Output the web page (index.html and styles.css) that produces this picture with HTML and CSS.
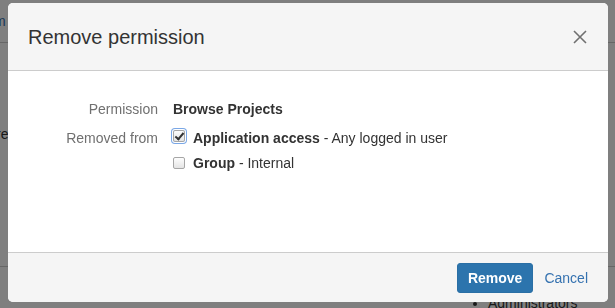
FILE: index.html
```html
<!DOCTYPE html>
<html lang="en">
<head>
  <meta charset="UTF-8">
  <title>Remove permission</title>
  <meta name="viewport" content="width=device-width, initial-scale=1.0">
  <link rel="stylesheet" href="styles.css">
</head>
<body>

  <!-- page behind the dialog -->
  <div class="page">
    <nav class="page-nav"><a href="#">m</a></nav>
    <div class="page-content">
      <p class="page-text">re</p>
    </div>
    <div class="page-bottom">
      <ul class="page-list">
        <li>Administrators</li>
      </ul>
    </div>
  </div>

  <div class="overlay"></div>

  <div class="dialog">
    <header class="dialog-header">
      <h2>Remove permission</h2>
      <button class="close" aria-label="Close">
        <svg width="14" height="14" viewBox="0 0 14 14">
          <path d="M1 1 L13 13 M13 1 L1 13" stroke="#707070" stroke-width="1.6" fill="none"/>
        </svg>
      </button>
    </header>

    <div class="dialog-body">
      <div class="field-row">
        <span class="field-label">Permission</span>
        <span class="field-value"><strong>Browse Projects</strong></span>
      </div>
      <div class="field-row">
        <span class="field-label">Removed from</span>
        <div class="field-value">
          <label class="check first">
            <input type="checkbox" class="focused" checked>
            <span><strong>Application access</strong> - Any logged in user</span>
          </label>
          <label class="check">
            <input type="checkbox">
            <span><strong>Group</strong> - Internal</span>
          </label>
        </div>
      </div>
    </div>

    <footer class="dialog-footer">
      <button class="btn-primary">Remove</button>
      <a href="#" class="cancel">Cancel</a>
    </footer>
  </div>

</body>
</html>
```

FILE: styles.css
```css
body {
  margin: 0;
  width: 615px;
  height: 308px;
  overflow: hidden;
  font-family: 'Liberation Sans', Arial, sans-serif;
  font-size: 14px;
  line-height: 20px;
  color: #333;
  background: #fff;
}

/* page behind */
.page-nav {
  height: 42px;
  border-bottom: 1px solid #ccc;
  display: flex;
  align-items: center;
}

.page-nav a {
  margin-left: -6px;
  color: #3572b0;
  text-decoration: none;
}

.page-content {
  height: 223px;
  border-bottom: 1px solid #ccc;
}

.page-text {
  margin: 0;
  padding-top: 81px;
  margin-left: -4px;
  color: #333;
}

.page-list {
  margin: 0;
  padding: 26px 0 0 488px;
  color: #333;
}

.overlay {
  position: fixed;
  inset: 0;
  background: rgba(0, 0, 0, 0.5);
}

/* dialog */
.dialog {
  position: fixed;
  left: 8px;
  top: 3px;
  width: 600px;
  height: 299px;
  background: #fff;
  border-radius: 5px;
  overflow: hidden;
  display: flex;
  flex-direction: column;
}

.dialog-header {
  height: 67px;
  background: #f5f5f5;
  border-bottom: 1px solid #ccc;
  display: flex;
  align-items: center;
  justify-content: space-between;
  padding: 0 21px 0 20px;
}

.dialog-header h2 {
  margin: 0;
  font-size: 20px;
  font-weight: normal;
  color: #333;
}

.close {
  background: none;
  border: none;
  padding: 0;
  width: 14px;
  height: 14px;
  display: flex;
  cursor: pointer;
}

.dialog-body {
  flex: 1;
  padding: 28px 20px 0 20px;
}

.field-row {
  display: grid;
  grid-template-columns: 130px 1fr;
  column-gap: 15px;
  margin-bottom: 9px;
}

.field-label {
  text-align: right;
  color: #707070;
}

.field-value strong {
  font-weight: bold;
}

.check {
  display: flex;
  align-items: flex-start;
  gap: 8px;
}

.check.first {
  margin-bottom: 5px;
}

.check input {
  appearance: none;
  -webkit-appearance: none;
  margin: 4px 0 0 0;
  width: 12px;
  height: 12px;
  border: 1px solid #a6a6a6;
  border-radius: 2px;
  background: linear-gradient(#fdfdfd, #e4e4e4);
  position: relative;
  flex: none;
}

.check input:checked::after {
  content: "";
  position: absolute;
  left: 3px;
  top: 0px;
  width: 3px;
  height: 7px;
  border: solid #333;
  border-width: 0 2px 2px 0;
  transform: rotate(40deg);
}

.check input.focused {
  margin-top: 2px;
  box-shadow: 0 0 0 1px #fff, 0 0 0 2px #7aa7e6;
}

.dialog-footer {
  height: 49px;
  background: #f5f5f5;
  border-top: 1px solid #ccc;
  display: flex;
  align-items: center;
  justify-content: flex-end;
  gap: 11px;
  padding: 0 20px;
}

.btn-primary {
  height: 30px;
  padding: 0 10px;
  background: #2c74ad;
  border: 1px solid #2a6fa5;
  border-radius: 3px;
  color: #fff;
  font-family: inherit;
  font-size: 14px;
  font-weight: bold;
  cursor: pointer;
}

.cancel {
  color: #3572b0;
  text-decoration: none;
}
```
